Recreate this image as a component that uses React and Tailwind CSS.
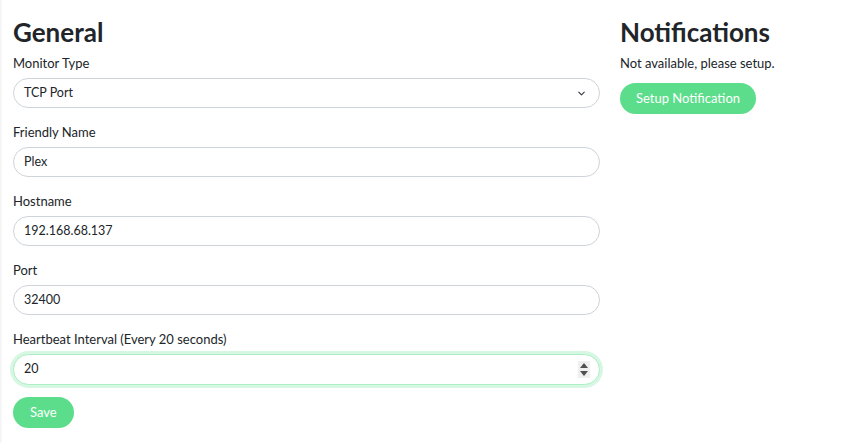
import { ChevronDown } from 'lucide-react';

function Label({ children }) {
  return <label className="block text-[13px] leading-[21px] mb-[4px] text-[#212529]">{children}</label>;
}

function TextField({ value }) {
  return (
    <div className="h-[30px] flex items-center rounded-full border border-[#ced4da] bg-white px-[10px] text-[12.5px] text-[#212529]">
      {value}
    </div>
  );
}

function Group({ label, children }) {
  return (
    <div className="mb-[14px]">
      <Label>{label}</Label>
      {children}
    </div>
  );
}

export default function App() {
  return (
    <div
      className="min-h-screen bg-white text-[#212529] border-l-[2px] border-[#f6f6f6]"
      style={{ fontFamily: 'Lato, "Noto Sans", sans-serif' }}
    >
      <div className="flex pl-[11px] pt-[16px]">
        {/* General */}
        <div className="w-[587px]">
          <h1 className="text-[26px] leading-[33px] font-bold mb-[4px]">General</h1>

          <Group label="Monitor Type">
            <div className="h-[30px] flex items-center justify-between rounded-full border border-[#ced4da] bg-white pl-[10px] pr-[12px] text-[12.5px]">
              <span>TCP Port</span>
              <ChevronDown className="w-[11px] h-[11px] mt-[1px] text-[#343a40]" strokeWidth={2.5} />
            </div>
          </Group>

          <Group label="Friendly Name">
            <TextField value="Plex" />
          </Group>

          <Group label="Hostname">
            <TextField value="192.168.68.137" />
          </Group>

          <Group label="Port">
            <TextField value="32400" />
          </Group>

          <div className="mb-[12px]">
            <Label>Heartbeat Interval (Every 20 seconds)</Label>
            <div className="h-[31px] flex items-center justify-between rounded-full border border-[#aeeec5] bg-white pl-[10px] pr-[9px] text-[12.5px] shadow-[0_0_0_3px_#d6f7e2]">
              <span>20</span>
              <span className="w-[12px] h-[17px] bg-[#efefef] flex flex-col items-center justify-center gap-[3px]">
                <svg width="8" height="5" viewBox="0 0 8 5"><path d="M0 5 L4 0 L8 5 Z" fill="#505050" /></svg>
                <svg width="8" height="5" viewBox="0 0 8 5"><path d="M0 0 L4 5 L8 0 Z" fill="#505050" /></svg>
              </span>
            </div>
          </div>

          <button className="h-[31px] px-[17px] rounded-full bg-[#5cdd8b] text-white text-[13px]">Save</button>
        </div>

        {/* Notifications */}
        <div className="ml-[20px]">
          <h1 className="text-[26px] leading-[33px] font-bold mb-[4px]">Notifications</h1>
          <p className="text-[13px] leading-[21px] mb-[9px]">Not available, please setup.</p>
          <button className="h-[31px] px-[16px] rounded-full bg-[#5cdd8b] text-white text-[13px]">Setup Notification</button>
        </div>
      </div>
    </div>
  );
}
